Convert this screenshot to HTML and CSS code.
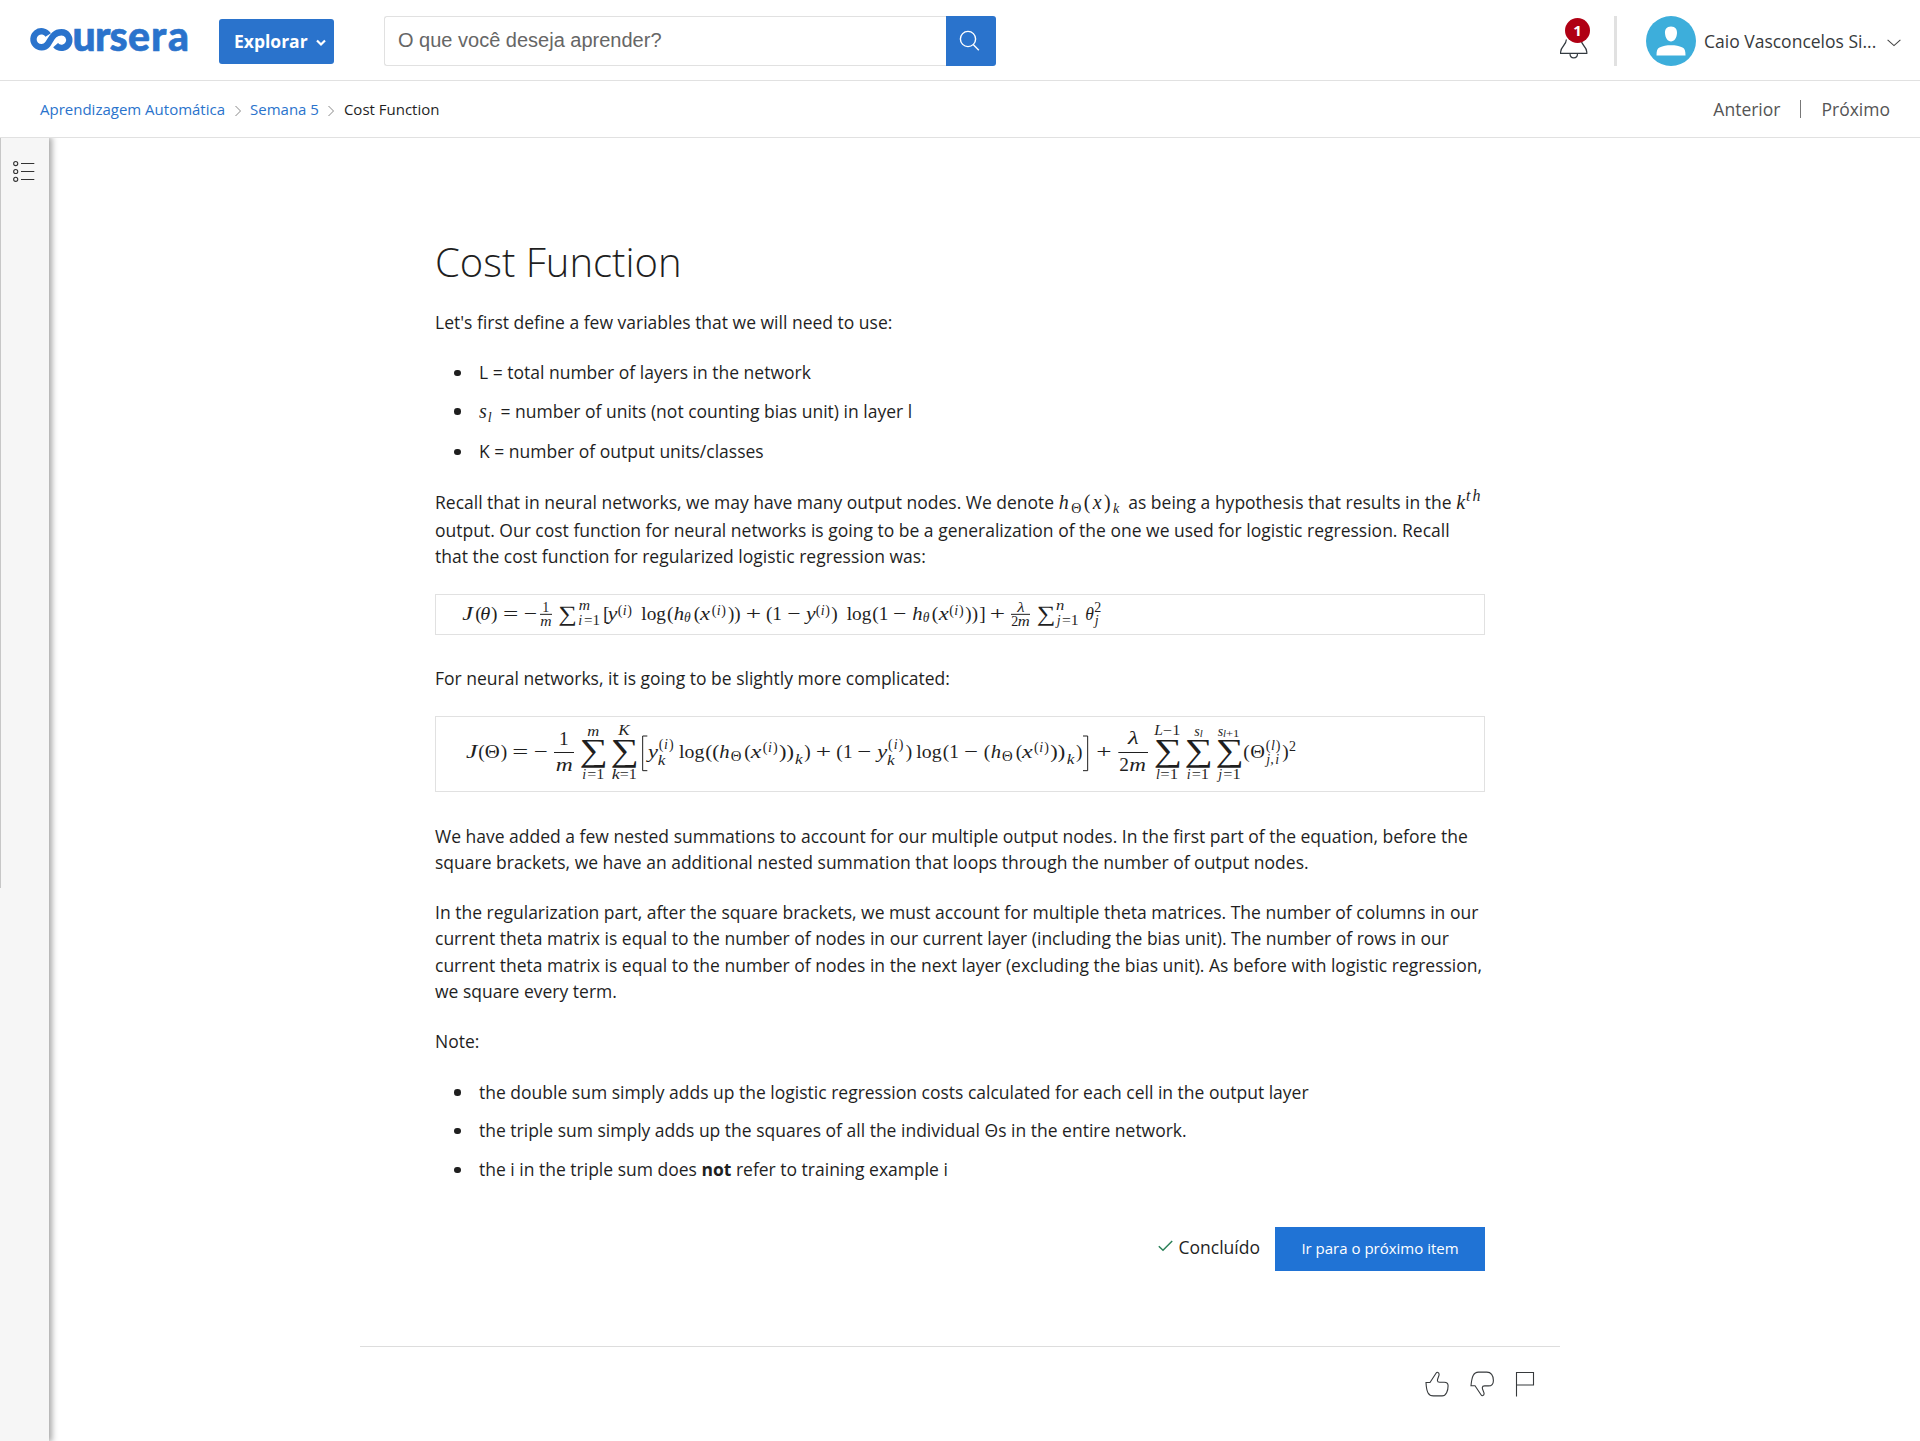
FILE: index.html
```html
<!DOCTYPE html>
<html lang="pt-BR">
<head>
<meta charset="utf-8">
<title>Cost Function | Coursera</title>
<link rel="stylesheet" href="styles.css">
</head>
<body>
<header class="header">
  <svg class="logo" viewBox="0 0 160 26" role="img" aria-label="coursera">
    <path class="logo-mark" d="M18.2 8A8 8 0 1 0 17.6 17.4C21.5 12 23 5.300 31.500 5.300A7.800 7.800 0 1 1 25.600 18.200"/>
    <text class="logo-text" y="23.6"><tspan x="42.500">u</tspan><tspan x="65">r</tspan><tspan x="79.500">s</tspan><tspan x="98">e</tspan><tspan x="121">r</tspan><tspan x="138">a</tspan></text>
  </svg>
  <button class="explore">Explorar
    <svg width="10" height="8" viewBox="0 0 10 8"><path d="M1 1.5l4 4 4-4" fill="none" stroke="#fff" stroke-width="2.2"/></svg>
  </button>
  <div class="search">
    <div class="search-field">O que você deseja aprender?</div>
    <button class="search-button" aria-label="Buscar">
      <svg width="22" height="22" viewBox="0 0 22 22" fill="none" stroke="#fff" stroke-width="1.4"><circle cx="9" cy="9" r="7.6"/><path d="M14.2 14.6l5.6 5.6"/></svg>
    </button>
  </div>
  <div class="bell">
    <svg width="30" height="24" viewBox="0 0 30 24" fill="none" stroke="#333a40" stroke-width="1.2"><path d="M7.4 3.5C7.2 9.5 1.6 10.5 1.6 16v1.4h26.2V16C27.8 10.5 22.2 9.5 22 3.5M11 17.5c0 5.8 7.5 5.8 7.5 0"/></svg>
    <span class="badge">1</span>
  </div>
  <div class="divider"></div>
  <svg class="avatar" width="50" height="50" viewBox="0 0 50 50"><circle cx="25" cy="25" r="25" fill="#3daedb"/><path fill="#fff" d="M25 10.5c4.500 0 6.300 3 6 6.800-.4 5-2.800 8.200-6 8.200s-5.600-3.200-6-8.200c-.3-3.800 1.500-6.800 6-6.800zM10.500 39.500c0-4.500.6-7 3-8 3.500-1.600 7-2.200 11.500-2.200s8 .6 11.500 2.200c2.400 1 3 3.500 3 8z"/></svg>
  <span class="user">Caio Vasconcelos Si...</span>
  <svg class="user-arrow" width="14" height="8" viewBox="0 0 14 8"><path d="M.6.8L7 6.6 13.4.8" fill="none" stroke="#444" stroke-width="1.1"/></svg>
</header>

<nav class="crumbs">
  <a class="link">Aprendizagem Automática</a>
  <svg class="sep" viewBox="0 0 6 12"><path d="M.5 1l5 5-5 5"/></svg>
  <a class="link">Semana 5</a>
  <svg class="sep" viewBox="0 0 6 12"><path d="M.5 1l5 5-5 5"/></svg>
  <span>Cost Function</span>
  <div class="pager"><a>Anterior</a><i class="bar"></i><a>Próximo</a></div>
</nav>

<div class="body">
  <aside class="rail">
    <svg width="22" height="22" viewBox="0 0 22 22" fill="none" stroke="#333" stroke-width="1.1"><circle cx="2.7" cy="2.6" r="2.05"/><circle cx="2.7" cy="10.5" r="2.05"/><circle cx="2.7" cy="18.3" r="2.05"/><path d="M8 2.5h13.3M8 10.5h13.3M8 18.5h13.3"/></svg>
  </aside>
  <main class="main">
    <article class="article">
      <h1>Cost Function</h1>
      <p>Let's first define a few variables that we will need to use:</p>
      <ul>
        <li>L = total number of layers in the network</li>
        <li><span class="math unit">s<small>l</small></span> = number of units (not counting bias unit) in layer l</li>
        <li>K = number of output units/classes</li>
      </ul>
      <p>Recall that in neural networks, we may have many output nodes. We denote <span class="math hyp">h<small class="up">Θ</small><b>(</b>x<b>)</b><small>k</small></span> as being a hypothesis that results in the <span class="math kth">k<small class="sup">th</small></span><br>output. Our cost function for neural networks is going to be a generalization of the one we used for logistic regression. Recall<br>that the cost function for regularized logistic regression was:</p>

      <figure class="formula">
        <svg width="1048" height="39" viewBox="18 15 3144 117">
          <g class="r">
            <text x="136" y="90">(</text><text x="183" y="90">)</text>
            <text x="219" y="90" textLength="46">=</text><text x="281" y="90" textLength="40">−</text>
            <text x="519" y="90">[</text><text x="634" y="90" textLength="74">log</text><text x="711" y="90">(</text><text x="791" y="90">(</text><text x="894" y="90" textLength="38">))</text>
            <text x="947" y="90" textLength="46">+</text><text x="1008" y="90">(</text><text x="1027" y="90">1</text>
            <text x="1072" y="90" textLength="40">−</text><text x="1204" y="90">)</text><text x="1250" y="90" textLength="74">log</text><text x="1327" y="90">(</text><text x="1346" y="90">1</text>
            <text x="1389" y="90" textLength="40">−</text><text x="1505" y="90">(</text><text x="1606" y="90" textLength="38">))</text><text x="1648" y="90">]</text>
            <text x="1679" y="90" textLength="46">+</text>
          </g>
          <g class="i">
            <text x="97" y="90" textLength="32">J</text><text x="151" y="90" textLength="30">θ</text><text x="533" y="90" textLength="29">y</text>
            <text x="731" y="90" textLength="31">h</text><text x="810" y="90" textLength="30">x</text><text x="1128" y="90" textLength="29">y</text>
            <text x="1447" y="90" textLength="31">h</text><text x="1526" y="90" textLength="30">x</text><text x="1966" y="90" textLength="26">θ</text>
          </g>
          <g class="s i">
            <text x="331" y="107" textLength="34">m</text><text x="446" y="60" textLength="34">m</text><text x="445" y="104">i</text>
            <text x="578" y="75">i</text><text x="762" y="96" textLength="20">θ</text><text x="860" y="75">i</text>
            <text x="1172" y="75">i</text><text x="1478" y="96" textLength="20">θ</text><text x="1573" y="75">i</text>
            <text x="1762" y="65" textLength="22">λ</text><text x="1763" y="107" textLength="36">m</text><text x="1878" y="60" textLength="25">n</text><text x="1880" y="104">j</text><text x="1994" y="104">j</text>
          </g>
          <g class="s r">
            <text x="337" y="65">1</text><text x="462" y="104" textLength="48">=1</text>
            <text x="563" y="75">(</text><text x="592" y="75">)</text><text x="845" y="75">(</text><text x="874" y="75">)</text>
            <text x="1157" y="75">(</text><text x="1186" y="75">)</text><text x="1558" y="75">(</text><text x="1587" y="75">)</text>
            <text x="1744" y="107">2</text><text x="1896" y="104" textLength="50">=1</text><text x="1993" y="65">2</text>
          </g>
          <g class="sum sum-small"><text x="385" y="92" textLength="56">∑</text><text x="1820" y="92" textLength="56">∑</text></g>
          <path class="rule" d="M330 73H366M1743 73H1800"/>
        </svg>
      </figure>

      <p>For neural networks, it is going to be slightly more complicated:</p>

      <figure class="formula tall">
        <svg width="1048" height="74" viewBox="18 21 3144 222">
          <g class="r">
            <text x="145" y="145">(</text><text x="164" y="145" textLength="45">Θ</text><text x="212" y="145">)</text>
            <text x="247" y="145" textLength="48">=</text><text x="311" y="145" textLength="42">−</text><text x="387" y="105">1</text>
            <text x="747" y="145" textLength="76">log</text><text x="826" y="145" textLength="42">((</text><text x="943" y="145">(</text><text x="1047" y="145" textLength="45">))</text><text x="1123" y="145">)</text>
            <text x="1157" y="145" textLength="46">+</text><text x="1219" y="145">(</text><text x="1239" y="145">1</text><text x="1282" y="145" textLength="42">−</text>
            <text x="1427" y="145">)</text><text x="1459" y="145" textLength="76">log</text><text x="1538" y="145">(</text><text x="1558" y="145">1</text><text x="1602" y="145" textLength="42">−</text>
            <text x="1661" y="145">(</text><text x="1757" y="145">(</text><text x="1861" y="145" textLength="45">))</text><text x="1938" y="145">)</text>
            <text x="1999" y="145" textLength="46">+</text><text x="2068" y="183">2</text><text x="2440" y="145">(</text><text x="2461" y="145" textLength="44">Θ</text><text x="2557" y="145">)</text>
          </g>
          <g class="i">
            <text x="108" y="145" textLength="34">J</text><text x="377" y="183" textLength="51">m</text><text x="654" y="145" textLength="30">y</text>
            <text x="868" y="145" textLength="31">h</text><text x="962" y="145" textLength="32">x</text><text x="1342" y="145" textLength="30">y</text>
            <text x="1682" y="145" textLength="31">h</text><text x="1776" y="145" textLength="32">x</text><text x="2094" y="102" textLength="32">λ</text><text x="2098" y="183" textLength="50">m</text>
          </g>
          <g class="s i">
            <text x="472" y="77" textLength="36">m</text><text x="565" y="76" textLength="34">K</text><text x="457" y="207">i</text><text x="545" y="207" textLength="24">k</text>
            <text x="702" y="117">i</text><text x="683" y="166" textLength="23">k</text><text x="1014" y="127">i</text><text x="1095" y="162" textLength="23">k</text>
            <text x="1391" y="117">i</text><text x="1371" y="166" textLength="23">k</text><text x="1828" y="127">i</text><text x="1910" y="162" textLength="23">k</text>
            <text x="2173" y="76" textLength="26">L</text><text x="2178" y="207">l</text><text x="2293" y="77">s</text><text class="tiny" x="2309" y="82">l</text><text x="2270" y="207">i</text>
            <text x="2363" y="77">s</text><text class="tiny" x="2379" y="82">l</text><text x="2365" y="207">j</text><text x="2523" y="119">l</text><text x="2509" y="163">j,</text><text x="2536" y="163">i</text>
          </g>
          <g class="s r">
            <text x="472" y="207" textLength="51">=1</text><text x="569" y="207" textLength="51">=1</text>
            <text x="686" y="117">(</text><text x="717" y="117">)</text><text x="902" y="152" textLength="32">Θ</text><text x="998" y="127">(</text><text x="1029" y="127">)</text>
            <text x="1374" y="117">(</text><text x="1406" y="117">)</text><text x="1716" y="152" textLength="32">Θ</text><text x="1812" y="127">(</text><text x="1843" y="127">)</text>
            <text x="2199" y="76" textLength="52">−1</text><text x="2191" y="207" textLength="53">=1</text><text x="2285" y="207" textLength="52">=1</text><text x="2380" y="207" textLength="52">=1</text>
            <text class="tiny" x="2388" y="82" textLength="40">+1</text><text x="2507" y="119">(</text><text x="2537" y="119">)</text><text x="2577" y="122">2</text>
          </g>
          <g class="sum"><text x="449" y="152" textLength="85">∑</text><text x="542" y="152" textLength="85">∑</text><text x="2172" y="152" textLength="85">∑</text><text x="2264" y="152" textLength="85">∑</text><text x="2357" y="152" textLength="85">∑</text></g>
          <path class="rule" d="M372 127.5H432M2065 127.5H2154"/>
          <path class="rule" d="M652 78H638V182H652M1959 78H1973V182H1959"/>
        </svg>
      </figure>

      <p>We have added a few nested summations to account for our multiple output nodes. In the first part of the equation, before the<br>square brackets, we have an additional nested summation that loops through the number of output nodes.</p>
      <p>In the regularization part, after the square brackets, we must account for multiple theta matrices. The number of columns in our<br>current theta matrix is equal to the number of nodes in our current layer (including the bias unit). The number of rows in our<br>current theta matrix is equal to the number of nodes in the next layer (excluding the bias unit). As before with logistic regression,<br>we square every term.</p>
      <p>Note:</p>
      <ul>
        <li>the double sum simply adds up the logistic regression costs calculated for each cell in the output layer</li>
        <li>the triple sum simply adds up the squares of all the individual Θs in the entire network.</li>
        <li>the i in the triple sum does <strong>not</strong> refer to training example i</li>
      </ul>
      <div class="complete">
        <svg width="15" height="12" viewBox="0 0 15 12"><path d="M.8 6.2l4.2 4L14.2 1" fill="none" stroke="#2a8058" stroke-width="1.5"/></svg>
        <span>Concluído</span>
        <button class="next">Ir para o próximo item</button>
      </div>
    </article>
    <footer class="feedback">
      <svg width="24" height="26" viewBox="0 0 24 26"><path d="M1 11.5h4L11.2 2c.8-1.200 2.800-.8 2.900 1.200.1 2-1.800 4.500-1.700 6.300.1 1.300 1 1.700 2.200 1.700h4.600c2.600 0 3.900 1.500 3.900 3.500 0 5-2 10.200-6 10.200H8.500C3.500 24.900 1.500 21.500 1 11.500z"/></svg>
      <svg width="24" height="26" viewBox="0 0 24 26"><path d="M1 14.800h4L11.200 24c.8 1.200 2.800.8 2.900-1.200.1-2-2-4.300-1.800-6.200.1-1.300 1.100-1.700 2.300-1.700h3.800c3.500 0 5-2.500 5-5.500 0-5-2.500-8.300-6.500-8.300H8.500C3.500 1.100 1.800 5.500 1 14.800z"/></svg>
      <svg width="20" height="26" viewBox="0 0 20 26"><path d="M1.5 25.500v-24h17v12.500h-17"/></svg>
    </footer>
  </main>
</div>
<script src="formula.js"></script>
</body>
</html>
```
FILE: formula.js
```js
// Symbols with a set width are stretched to it, not just letter-spaced.
document.querySelectorAll(".formula text[textLength]").forEach(function (t) {
  t.setAttribute("lengthAdjust", "spacingAndGlyphs");
});
```
FILE: styles.css
```css
* { box-sizing: border-box; }
body {
  margin: 0;
  height: 1441px;
  overflow: hidden;
  display: flex;
  flex-direction: column;
  background: #fff;
  color: #1f1f1f;
  font-family: "Open Sans", sans-serif;
  font-size: 17.5px;
  line-height: 26.25px;
}
button { border: 0; padding: 0; font-family: inherit; color: #fff; }
svg { display: block; flex: none; }

.header {
  height: 81px;
  flex: none;
  display: flex;
  align-items: flex-start;
  padding: 16px 19px 0 30px;
  border-bottom: 1px solid #e1e1e1;
}
.logo { width: 160px; height: 26px; margin-top: 11px; overflow: visible; }
.logo-mark { fill: none; stroke: #2a73cc; stroke-width: 6.4; }
.logo-text { font: 900 41px Lato, sans-serif; fill: #2a73cc; stroke: #2a73cc; stroke-width: .6; }
.explore {
  display: flex;
  align-items: center;
  gap: 8px;
  width: 115px;
  height: 45px;
  margin: 3px 50px 0 29px;
  padding: 0 0 2px 15px;
  border-radius: 3px;
  background: #2a73cc;
  font-size: 17.5px;
  font-weight: 700;
}
.explore svg { margin-top: 5px; }
.search { display: flex; width: 612px; height: 50px; }
.search-field {
  flex: 1;
  padding-left: 13px;
  border: 1px solid #e1e1e1;
  border-right: 0;
  border-radius: 3px 0 0 3px;
  color: #666;
  font: 20px/46px "Liberation Sans", sans-serif;
}
.search-button {
  display: flex;
  align-items: center;
  justify-content: center;
  width: 50px;
  padding-right: 3px;
  background: #2a73cc;
  border-radius: 0 3px 3px 0;
}
.bell { position: relative; width: 30px; height: 50px; margin-left: auto; padding-top: 20px; }
.badge {
  position: absolute;
  left: 6px;
  top: 2px;
  width: 25px;
  height: 25px;
  border-radius: 50%;
  background: #b00014;
  color: #fff;
  font-size: 15px;
  font-weight: 700;
  line-height: 25px;
  text-align: center;
}
.divider { width: 3px; height: 50px; margin: 0 29px 0 25px; background: #e1e1e1; }
.user { width: 174px; margin: 12px 0 0 8px; white-space: nowrap; font-size: 17.5px; color: #373a3c; }
.user-arrow { margin: 23px 0 0 9px; }

.crumbs {
  height: 57px;
  flex: none;
  display: flex;
  align-items: center;
  padding: 0 30px 0 40px;
  border-bottom: 1px solid #e1e1e1;
  font-size: 15px;
}
.link { color: #2a73cc; }
.sep { width: 6px; height: 12px; margin: 3px 9.5px 0; fill: none; stroke: #888; }
.pager { display: flex; align-items: center; margin-left: auto; color: #555; font-size: 17.5px; }
.bar { width: 1px; height: 18px; margin: 0 20px; background: #777; }

.body { flex: 1; display: flex; }
.rail {
  position: relative;
  width: 49px;
  padding: 23px 0 0 13px;
  background: #f6f6f6;
  box-shadow: 2px 0 6px 1px rgba(0, 0, 0, .35);
  clip-path: inset(0 -10px 0 0);
}
.rail::before { content: ""; position: absolute; left: 0; top: 0; width: 1px; height: 750px; background: #c7c7c7; }
.main { flex: 1; padding-left: 311px; }
.article { width: 1050px; margin-left: 75px; padding-top: 95.5px; }
h1 { margin: 0 0 20px; font-size: 40px; font-weight: 300; line-height: 55px; }
p { margin: 0 0 23.9px; white-space: nowrap; }
ul { margin: 24.5px 0; padding: 0; list-style: none; }
li { position: relative; padding-left: 44px; margin-bottom: 12px; }
li:nth-child(2) { margin-bottom: 12.75px; }
li:last-child { margin-bottom: 0; }
li::before { content: ""; position: absolute; left: 19px; top: 10.5px; width: 6.5px; height: 6.5px; border-radius: 50%; background: #1f1f1f; }

.math {
  display: inline-block;
  line-height: 22px;
  vertical-align: baseline;
  font-family: "Liberation Serif", serif;
  font-style: italic;
  font-size: 20px;
  white-space: nowrap;
}
.math small { font-size: 14px; line-height: 0; vertical-align: -4px; }
.math .up { font-style: normal; }
.math .sup { vertical-align: 8px; font-size: 16px; letter-spacing: 2px; }
.math b { font-style: normal; font-weight: 400; }
.unit { width: 17px; letter-spacing: 1px; }
.hyp { width: 65px; letter-spacing: 2.4px; }
.kth { width: 28px; letter-spacing: 1px; }
.unit::after, .kth::after { content: ""; display: inline-block; height: 20px; vertical-align: -8px; }

.formula { margin: 24.5px 0 29.75px; border: 1px solid #e1e1e1; }
.tall { margin: 25px 0 30.75px; }
.r text, .i text, .sum text { font-family: "Liberation Serif", serif; font-size: 58px; fill: #1f1f1f; }
.i text { font-style: italic; }
.s text { font-size: 42px; }
.s text.tiny { font-size: 32px; }
.sum text { font-size: 96px; }
.sum-small text { font-size: 66px; }
.rule { fill: none; stroke: #1f1f1f; stroke-width: 3; }

.complete { display: flex; height: 44px; justify-content: flex-end; margin-top: 44.5px; }
.complete svg { margin: 13px 6px 0 0; }
.complete span { margin: 7px 15px 0 0; }
.next { width: 210px; height: 44px; padding-bottom: 2px; background: #2073d5; font-size: 15px; }
.feedback {
  display: flex;
  width: 1200px;
  margin-top: 75px;
  padding: 24px 25px 0;
  justify-content: flex-end;
  gap: 21px;
  border-top: 1px solid #ddd;
}
.feedback path { fill: none; stroke: #373a3c; stroke-width: 1.1; }
```
